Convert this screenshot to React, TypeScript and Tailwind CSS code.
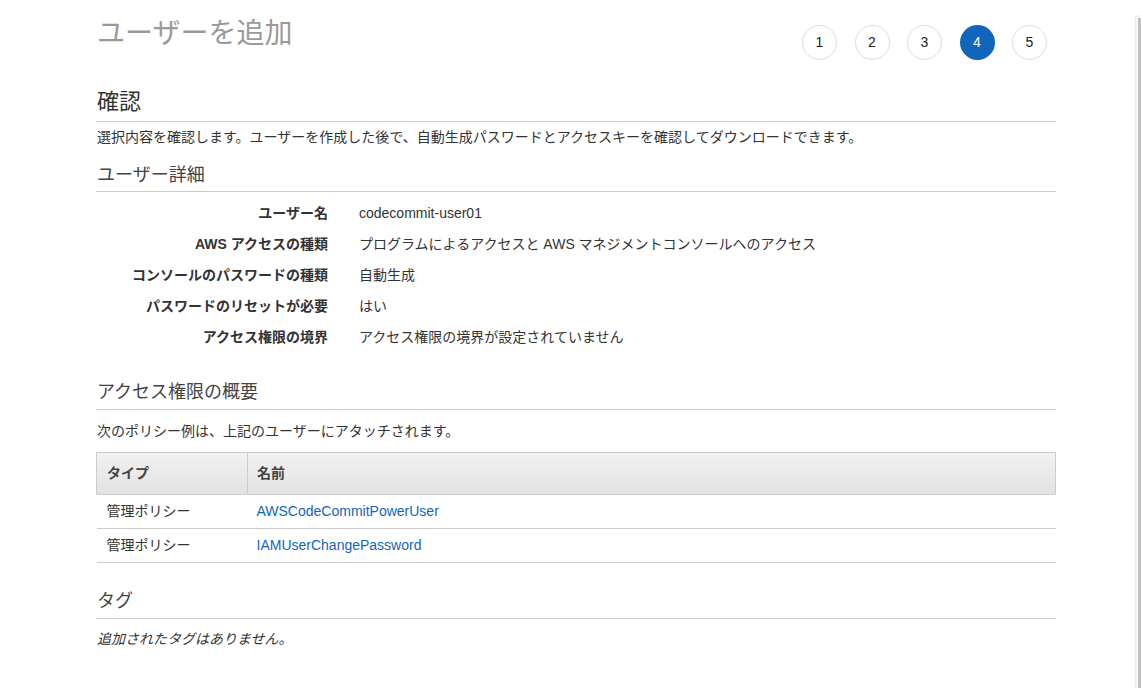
import React from "react";

const font = { fontFamily: '"Liberation Sans", "Noto Sans CJK JP", sans-serif' };

const details = [
  { label: "ユーザー名", value: "codecommit-user01" },
  { label: "AWS アクセスの種類", value: "プログラムによるアクセスと AWS マネジメントコンソールへのアクセス" },
  { label: "コンソールのパスワードの種類", value: "自動生成" },
  { label: "パスワードのリセットが必要", value: "はい" },
  { label: "アクセス権限の境界", value: "アクセス権限の境界が設定されていません" },
];

const policies = [
  { type: "管理ポリシー", name: "AWSCodeCommitPowerUser" },
  { type: "管理ポリシー", name: "IAMUserChangePassword" },
];

export default function App() {
  return (
    <div className="flex min-h-screen bg-white text-[#333]" style={font}>
      <main className="flex-1 pl-[96px]">
        <div className="w-[960px]">
          <div className="flex justify-between items-start pt-[16px]">
            <h1 className="text-[28px] leading-[36px] text-[#9a9a9a] pl-[1px]">ユーザーを追加</h1>
            <div className="flex gap-[17.5px] mt-[9px] mr-[9px]">
              {[1, 2, 3, 4, 5].map((n) => (
                <div
                  key={n}
                  className={
                    n === 4
                      ? "w-[35px] h-[35px] rounded-full bg-[#1166bb] text-white flex items-center justify-center text-[14px]"
                      : "w-[35px] h-[35px] rounded-full border border-[#dddddd] text-[#222] flex items-center justify-center text-[14px]"
                  }
                >
                  {n}
                </div>
              ))}
            </div>
          </div>

          <h2 className="mt-[27px] text-[22px] leading-[30px] text-[#333] pb-[4px] border-b border-[#cccccc] pl-[1px]">確認</h2>
          <p className="mt-[5px] text-[14px] leading-[20px] pl-[1px]">
            選択内容を確認します。ユーザーを作成した後で、自動生成パスワードとアクセスキーを確認してダウンロードできます。
          </p>

          <h3 className="mt-[16px] text-[18px] leading-[24px] text-[#444] pb-[4px] border-b border-[#cccccc] pl-[1px]">ユーザー詳細</h3>
          <div className="mt-[6px]">
            {details.map((d) => (
              <div key={d.label} className="flex items-center h-[31px] text-[14px]">
                <div className="w-[232px] text-right font-bold text-[#333]">{d.label}</div>
                <div className="pl-[31px] text-[#333]">{d.value}</div>
              </div>
            ))}
          </div>

          <h3 className="mt-[27px] text-[18px] leading-[24px] text-[#444] pb-[5px] border-b border-[#cccccc] pl-[1px]">アクセス権限の概要</h3>
          <p className="mt-[11px] text-[14px] leading-[20px] pl-[1px]">次のポリシー例は、上記のユーザーにアタッチされます。</p>

          <table className="mt-[11px] w-full border-collapse text-[14px]">
            <thead>
              <tr className="h-[42px] bg-gradient-to-b from-[#f1f1f1] to-[#e2e2e2]">
                <th className="w-[151px] text-left font-bold text-[#444] pl-[10px] border border-[#cccccc]">タイプ</th>
                <th className="text-left font-bold text-[#444] pl-[9px] border border-[#cccccc]">名前</th>
              </tr>
            </thead>
            <tbody>
              {policies.map((p) => (
                <tr key={p.name} className="h-[34px] border-b border-[#cccccc]">
                  <td className="pl-[10px] text-[#333]">{p.type}</td>
                  <td className="pl-[9px]">
                    <a href="#" className="text-[#1166bb]">{p.name}</a>
                  </td>
                </tr>
              ))}
            </tbody>
          </table>

          <h3 className="mt-[26px] text-[18px] leading-[24px] text-[#444] pb-[5px] border-b border-[#cccccc] pl-[1px]">タグ</h3>
          <p className="mt-[10px] text-[14px] leading-[20px] italic pl-[1px]">追加されたタグはありません。</p>
        </div>
      </main>
      <div className="w-[6px] pt-[15px] flex flex-col">
        <div className="flex-1 flex bg-[#f7f7f7] border-l border-[#ececec]">
          <div className="flex-1" />
          <div className="w-[3px] mt-[3px] bg-[#c2c2c2]" />
        </div>
      </div>
    </div>
  );
}
